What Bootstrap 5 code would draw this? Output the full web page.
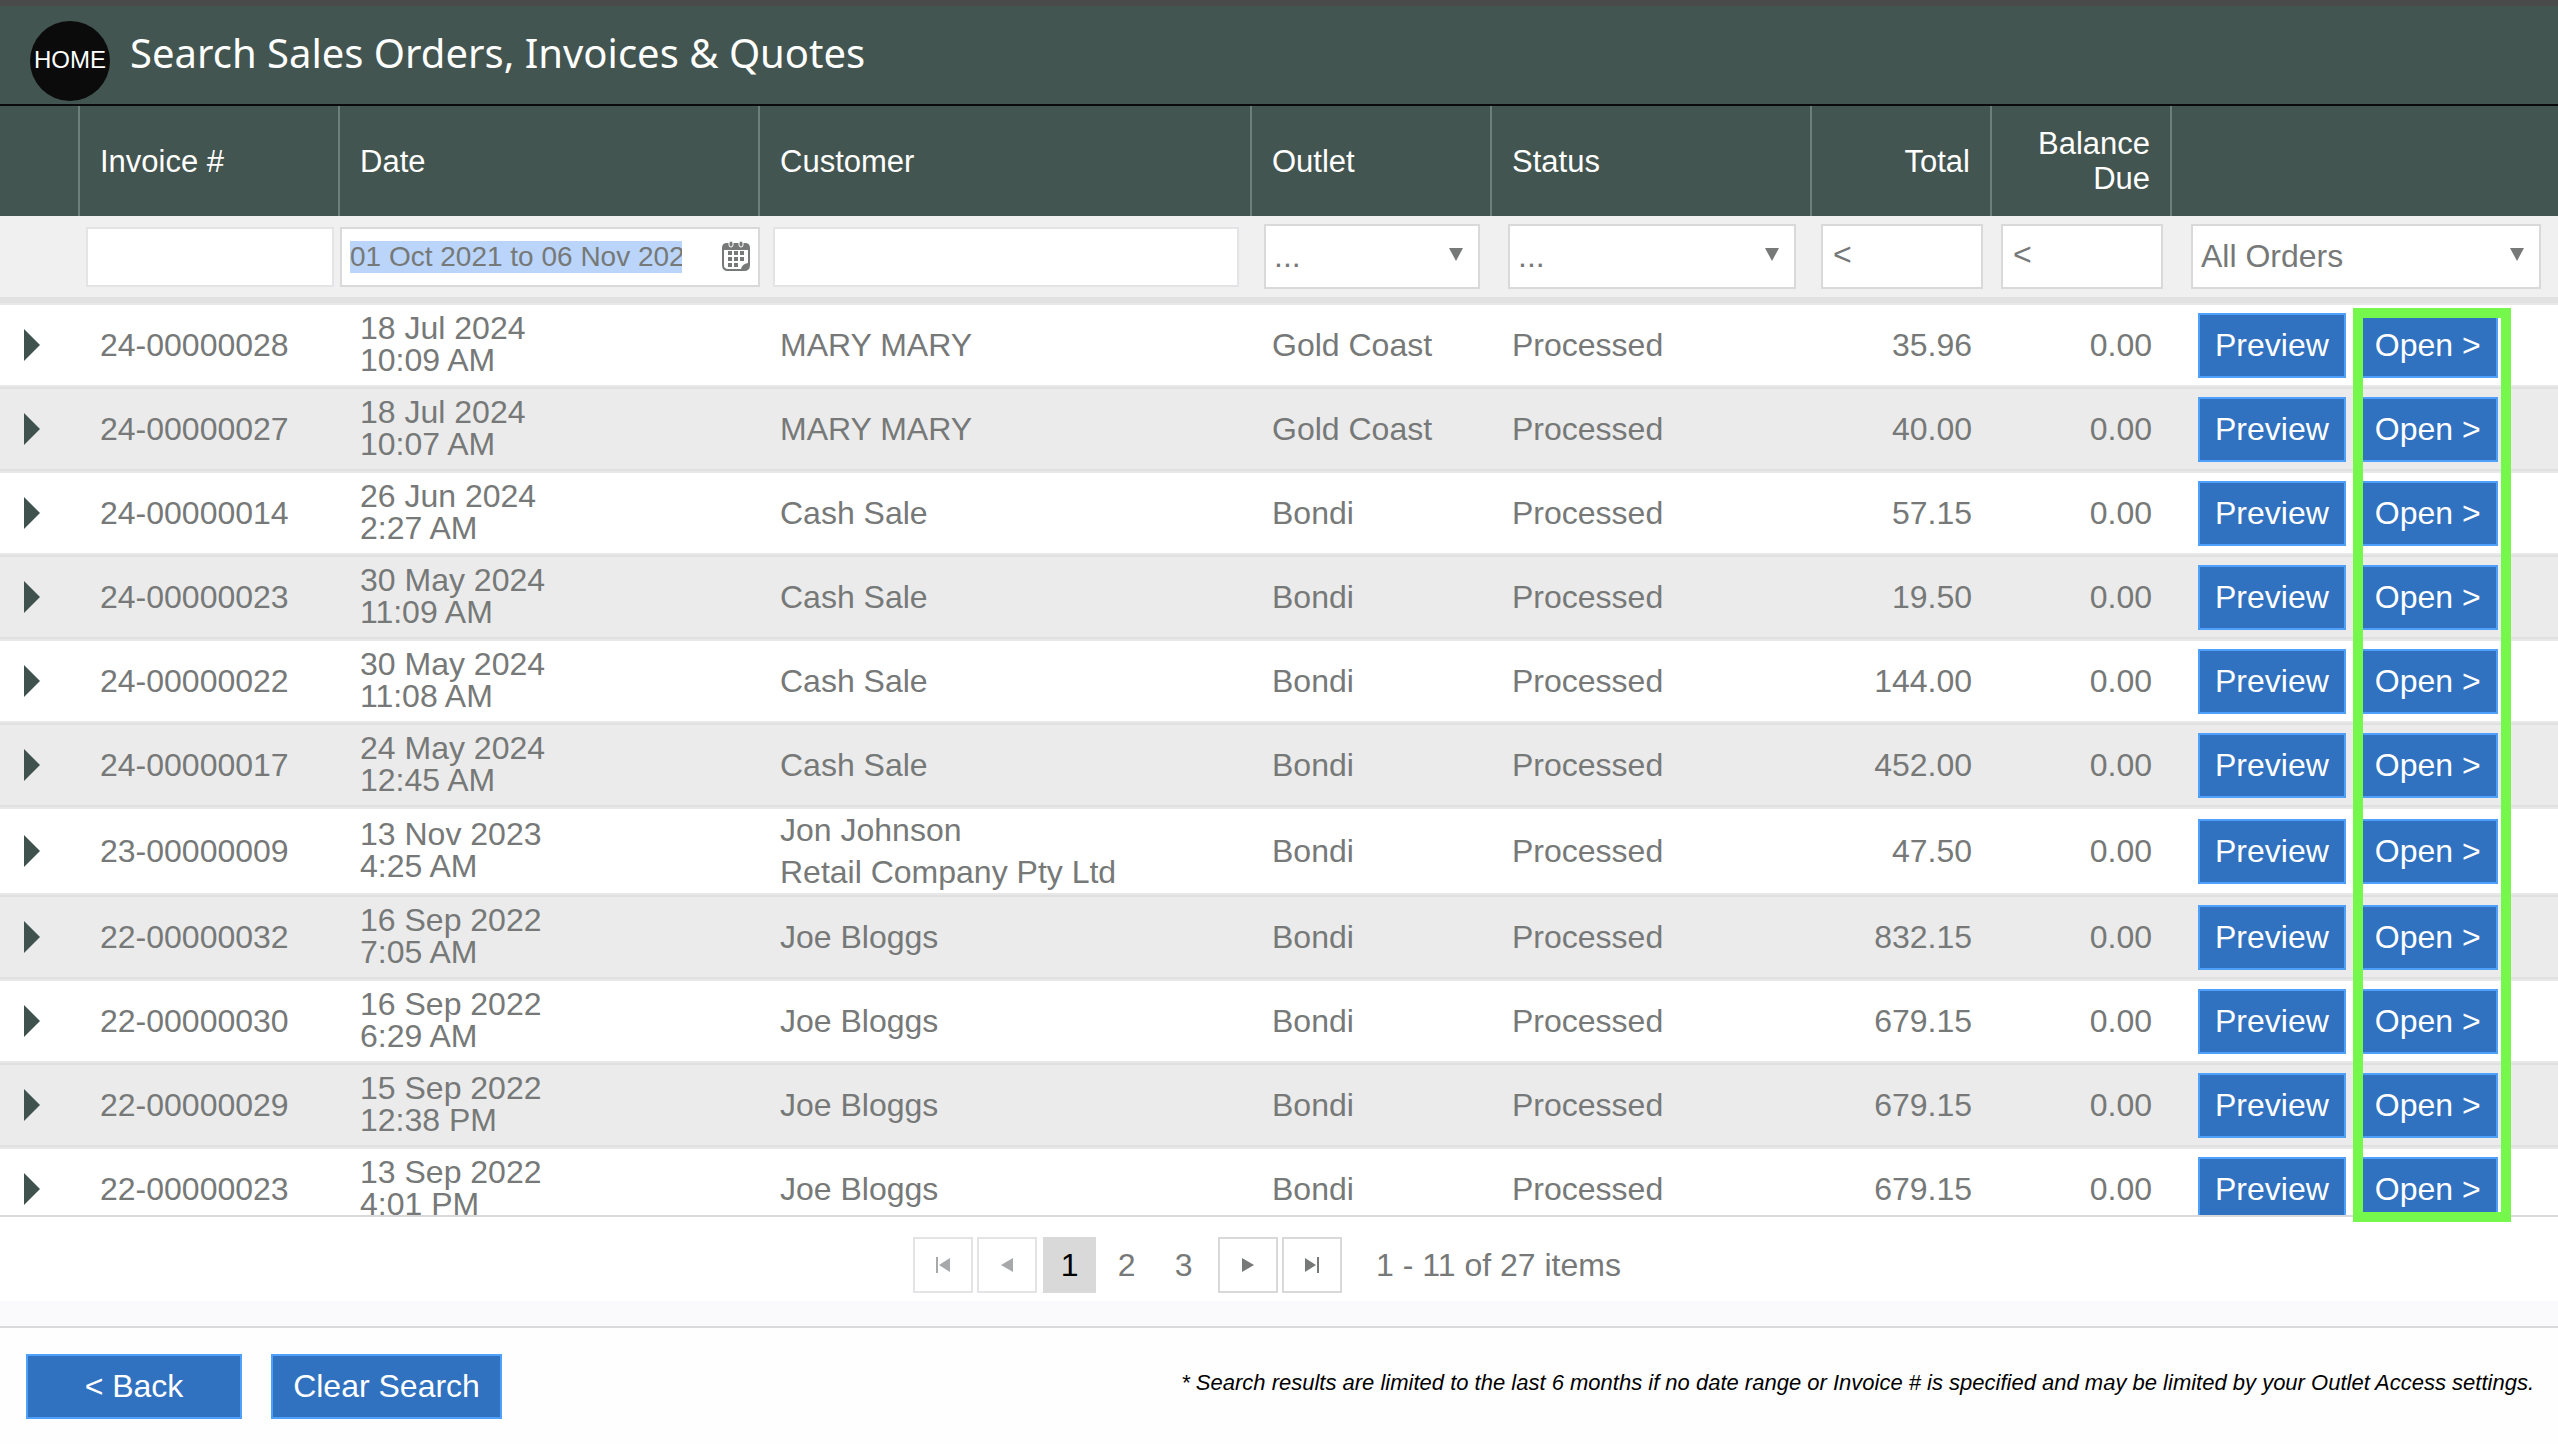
<!DOCTYPE html>
<html lang="en">
<head>
<meta charset="utf-8">
<meta name="viewport" content="width=device-width, initial-scale=1">
<title>Search Sales Orders, Invoices &amp; Quotes</title>
<link rel="stylesheet" href="https://cdn.jsdelivr.net/npm/bootstrap@5.3.0/dist/css/bootstrap.min.css">
<style>
:root { --ink: #767978; --pine: #435550; --line: #d9d9da; }
body { font-family: "Liberation Sans", Arial, sans-serif; font-size: 32px; line-height: 42px; color: var(--ink); background: #fefefe; }
.topbar { background: var(--pine); border-top: 6px solid #4a4a4a; border-bottom: 2px solid #0b0b0b; height: 106px; padding: 0 30px; gap: 20px; }
.home-link { width: 80px; height: 80px; margin-top: 15px; background: #0b0b0b; color: #fff; font-size: 24px; line-height: 78px; }
.page-title { font-family: "Noto Sans", sans-serif; font-size: 40px; line-height: 54px; margin-top: 20px; color: #fff; }

/* Results grid */
.grid-area { overflow: hidden; border-bottom: 2px solid var(--line); min-height: 0; }
.orders { width: 100%; table-layout: fixed; border-collapse: separate; border-spacing: 0; }
.orders .head-row th { height: 110px; padding: 0 20px; background: var(--pine); color: #fff; font-size: 31px; line-height: 35px; font-weight: 400; vertical-align: middle; border-right: 2px solid #6e7f7a; }
.orders .head-row th:last-child { border-right: 0; }
.orders .filter-row td { height: 87px; padding: 0; background: #f0f0f1; border-bottom: 6px solid #e1e1e1; vertical-align: middle; }
.orders tbody td { height: 84px; padding: 0 20px; background: #fff; border: solid #e8e8e8; border-width: 2px 0; vertical-align: middle; white-space: nowrap; }
.orders tbody tr:nth-child(even) td { background: #ebebeb; border-color: #e0e0e0; }
.orders tbody td.acts-cell { padding: 0 0 0 26px; }
.orders tbody td.exp-cell { padding: 0 0 0 24px; }
.when { line-height: 32px; padding-bottom: 2px; }
.c-exp { width: 80px; } .c-inv { width: 260px; } .c-date { width: 420px; } .c-out { width: 240px; }
.c-stat { width: 320px; } .c-num { width: 180px; } .c-act { width: 386px; }

/* Filters */
.f-inv { padding: 0 6px; }
.f-cust { padding: 0 13px; }
.f-out { padding: 0 12px; }
.f-stat { padding: 0 16px; }
.f-num { padding: 0 9px; }
.f-all { padding: 0 17px 0 19px; }
.fld { border: 2px solid var(--line); border-radius: 0; color: var(--ink); background-color: #fff; font-size: 32px; line-height: 42px; height: 65px; padding: 0 8px; }
.fld-text { height: 60px; border-color: #e4e4e7; }
.fld-num { padding: 0 10px 4px; }
.fld::placeholder { color: var(--ink); opacity: 1; }
.fld-pick { padding-bottom: 2px; background-image: url("data:image/svg+xml,%3Csvg xmlns='http://www.w3.org/2000/svg' viewBox='0 0 14 14'%3E%3Cpath fill='%23767978' d='M0 1h14L7 14z'/%3E%3C/svg%3E"); background-size: 14px 14px; background-position: right 15px top 21px; }
.date-box { border: 2px solid var(--line); background: #fff; height: 60px; padding: 0 8px; }
.date-in { width: 332px; height: 32px; border: 0; padding: 0; background: #bad5f9; color: var(--ink); font-size: 28px; line-height: 32px; }

.act { --bs-btn-color: #fff; --bs-btn-bg: #3071c0; --bs-btn-border-color: #4fa0fb; --bs-btn-hover-color: #fff; --bs-btn-hover-bg: #285fa3; --bs-btn-border-width: 2px; --bs-btn-border-radius: 0; --bs-btn-font-size: 32px; --bs-btn-line-height: 42px; --bs-btn-padding-x: 15px; --bs-btn-padding-y: 0; height: 65px; }
.act-back { width: 216px; }
.act-clear { width: 231px; }
.acts-row { gap: 12px; }

/* Highlight round the Open column */
.callout { position: absolute; top: 308px; bottom: 222px; right: 47px; width: 158px; border: 10px solid #75f74b; pointer-events: none; }

.pager { height: 84px; gap: 4px; padding: 12px 24px 0 0; background: #fff; }
.pg-step { width: 60px; height: 56px; border: 2px solid var(--line); background: #fff; color: #767978; }
.pg-step:disabled { border-color: #e4e4e7; color: #a6a8a9; }
.pg-nums { gap: 4px; margin: 0 4px 0 2px; }
.pg-num { width: 53px; height: 56px; line-height: 56px; color: var(--ink); }
.pg-num.now { background: #d9d9d9; color: #000; }
.pg-info { margin-left: 30px; }
.pad-strip { height: 25px; background: #fafafc; }
.foot { border-top: 2px solid var(--line); height: 118px; padding: 0 24px 0 26px; gap: 29px; }
.foot-note { font-size: 22px; line-height: 28px; padding-bottom: 6px; color: #000; }
</style>
</head>
<body>
<div class="d-flex flex-column vh-100 position-relative overflow-hidden">
  <header class="topbar d-flex align-items-start flex-shrink-0">
    <a href="#" class="home-link rounded-circle text-center text-decoration-none">HOME</a>
    <h1 class="page-title mb-0 fw-normal">Search Sales Orders, Invoices &amp; Quotes</h1>
  </header>

  <main class="grid-area flex-fill">
    <table class="orders">
      <colgroup><col class="c-exp"><col class="c-inv"><col class="c-date"><col><col class="c-out"><col class="c-stat"><col class="c-num"><col class="c-num"><col class="c-act"></colgroup>
      <thead>
        <tr class="head-row">
          <th></th><th scope="col">Invoice #</th><th scope="col">Date</th><th scope="col">Customer</th><th scope="col">Outlet</th><th scope="col">Status</th><th scope="col" class="text-end">Total</th><th scope="col" class="text-end">Balance Due</th><th></th>
        </tr>
        <tr class="filter-row">
          <td></td>
          <td><div class="f-inv"><input type="text" class="form-control fld fld-text" aria-label="Invoice #"></div></td>
          <td>
            <div class="date-box d-flex align-items-center justify-content-between">
              <input type="text" class="date-in" aria-label="Date" value="01 Oct 2021 to 06 Nov 2024">
              <button type="button" class="btn p-0 border-0 d-flex" aria-label="Pick dates">
                <svg width="28" height="32" viewBox="0 0 28 32" fill="#767978">
                  <path fill-rule="evenodd" d="M5 2h18q5 0 5 5v17q0 6-6 6H6q-6 0-6-6V7q0-5 5-5zM2 9v15q0 4 4 4h13q1-5 7-6V9z"/>
                  <g stroke="#fff"><rect x="7" y="0" width="4" height="6" rx="2"/><rect x="17" y="0" width="4" height="6" rx="2"/></g>
                  <path d="M6 10h4v4H6zm6 0h4v4h-4zm6 0h4v4h-4zM6 16h4v4H6zm6 0h4v4h-4zm6 0h4v4h-4zM6 22h4v4H6zm6 0h4v4h-4z"/>
                </svg>
              </button>
            </div>
          </td>
          <td><div class="f-cust"><input type="text" class="form-control fld fld-text" aria-label="Customer"></div></td>
          <td><div class="f-out"><select class="form-select fld fld-pick" aria-label="Outlet"><option>...</option></select></div></td>
          <td><div class="f-stat"><select class="form-select fld fld-pick" aria-label="Status"><option>...</option></select></div></td>
          <td><div class="f-num"><input type="text" class="form-control fld fld-num" aria-label="Total" placeholder="&lt;"></div></td>
          <td><div class="f-num"><input type="text" class="form-control fld fld-num" aria-label="Balance due" placeholder="&lt;"></div></td>
          <td><div class="f-all"><select class="form-select fld fld-pick" aria-label="Order type"><option>All Orders</option></select></div></td>
        </tr>
      </thead>
      <tbody id="order-rows"></tbody>
    </table>
  </main>

  <footer class="flex-shrink-0">
    <nav class="pager d-flex align-items-center justify-content-center" aria-label="Result pages">
      <button type="button" class="pg-step d-flex align-items-center justify-content-center p-0" disabled aria-label="First page"><svg width="16" height="16" viewBox="0 0 16 16" fill="currentColor"><path d="M1 0h2v16H1zM15 1v14L4 8z"/></svg></button>
      <button type="button" class="pg-step d-flex align-items-center justify-content-center p-0" disabled aria-label="Previous page"><svg width="16" height="16" viewBox="0 0 16 16" fill="currentColor"><path d="M14 1v14L2 8z"/></svg></button>
      <div class="pg-nums d-flex">
        <a href="#" class="pg-num now text-center text-decoration-none" aria-current="page">1</a>
        <a href="#" class="pg-num text-center text-decoration-none">2</a>
        <a href="#" class="pg-num text-center text-decoration-none">3</a>
      </div>
      <button type="button" class="pg-step d-flex align-items-center justify-content-center p-0" aria-label="Next page"><svg width="16" height="16" viewBox="0 0 16 16" fill="currentColor"><path d="M2 1v14l12-7z"/></svg></button>
      <button type="button" class="pg-step d-flex align-items-center justify-content-center p-0" aria-label="Last page"><svg width="16" height="16" viewBox="0 0 16 16" fill="currentColor"><path d="M13 0h2v16h-2zM1 1v14l11-7z"/></svg></button>
      <span class="pg-info">1 - 11 of 27 items</span>
    </nav>
    <div class="pad-strip"></div>
    <div class="foot d-flex align-items-center">
      <button type="button" class="btn act act-back">&lt; Back</button>
      <button type="button" class="btn act act-clear">Clear Search</button>
      <p class="foot-note fst-italic mb-0 ms-auto">* Search results are limited to the last 6 months if no date range or Invoice # is specified and may be limited by your Outlet Access settings.</p>
    </div>
  </footer>
  <div class="callout"></div>
</div>
<script src="https://cdn.jsdelivr.net/npm/bootstrap@5.3.0/dist/js/bootstrap.bundle.min.js"></script>
<script>
// invoice, date, time, customer, outlet, total
const orders = [
  ["24-00000028", "18 Jul 2024", "10:09 AM", "MARY MARY", "Gold Coast", "35.96"],
  ["24-00000027", "18 Jul 2024", "10:07 AM", "MARY MARY", "Gold Coast", "40.00"],
  ["24-00000014", "26 Jun 2024", "2:27 AM", "Cash Sale", "Bondi", "57.15"],
  ["24-00000023", "30 May 2024", "11:09 AM", "Cash Sale", "Bondi", "19.50"],
  ["24-00000022", "30 May 2024", "11:08 AM", "Cash Sale", "Bondi", "144.00"],
  ["24-00000017", "24 May 2024", "12:45 AM", "Cash Sale", "Bondi", "452.00"],
  ["23-00000009", "13 Nov 2023", "4:25 AM", "Jon Johnson<br>Retail Company Pty Ltd", "Bondi", "47.50"],
  ["22-00000032", "16 Sep 2022", "7:05 AM", "Joe Bloggs", "Bondi", "832.15"],
  ["22-00000030", "16 Sep 2022", "6:29 AM", "Joe Bloggs", "Bondi", "679.15"],
  ["22-00000029", "15 Sep 2022", "12:38 PM", "Joe Bloggs", "Bondi", "679.15"],
  ["22-00000023", "13 Sep 2022", "4:01 PM", "Joe Bloggs", "Bondi", "679.15"]
];
document.getElementById("order-rows").innerHTML = orders.map(([inv, day, time, cust, outlet, total]) => `
  <tr>
    <td class="exp-cell"><button type="button" class="btn p-0 border-0 d-flex" aria-label="Expand ${inv}"><svg width="16" height="32" viewBox="0 0 16 32"><path fill="#3f524d" d="M0 0l16 16L0 32z"/></svg></button></td>
    <td>${inv}</td>
    <td><div class="when">${day}<br>${time}</div></td>
    <td>${cust}</td>
    <td>${outlet}</td>
    <td>Processed</td>
    <td class="text-end">${total}</td>
    <td class="text-end">0.00</td>
    <td class="acts-cell"><div class="acts-row d-flex"><button type="button" class="btn act">Preview</button><button type="button" class="btn act">Open &gt;</button></div></td>
  </tr>`).join("");
</script>
</body>
</html>
